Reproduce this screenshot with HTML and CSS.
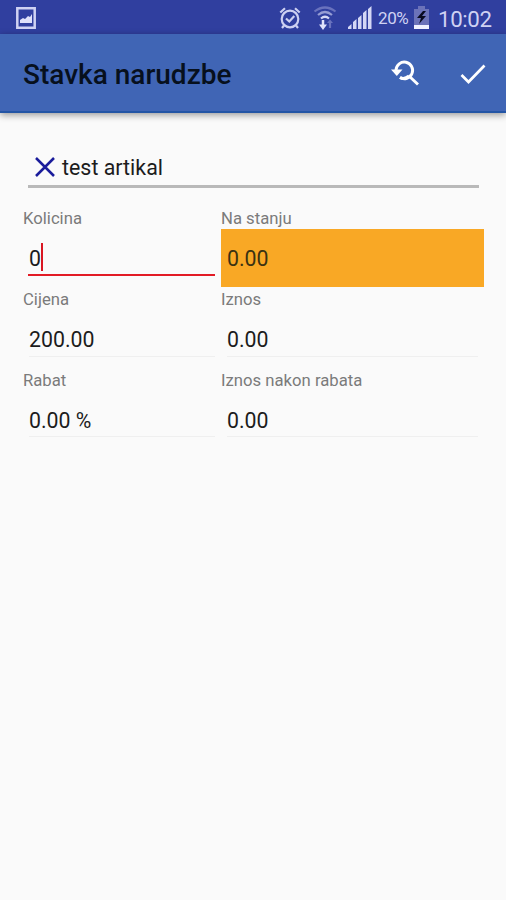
FILE: index.html
```html
<!DOCTYPE html>
<html lang="hr">
<head>
<meta charset="utf-8">
<meta name="viewport" content="width=device-width">
<title>Stavka narudzbe</title>
<link rel="stylesheet" href="styles.css">
</head>
<body>
<div class="statusbar">
  <svg class="photo" width="20" height="22" viewBox="0 0 20 22"><path d="M1.3 1.3h17.4v19.4H1.3z" fill="none" stroke="#cfd2f3" stroke-width="2.5"/><path d="M4 16v-3l3-2 2 1 3-3 2 1 2-3v9z" fill="#dfe1fa"/></svg>
  <svg class="alarm" width="22" height="24" viewBox="0 0 22 24" fill="none" stroke="#cdd0f2" stroke-width="2.2"><circle cx="11" cy="13" r="8.3"/><path d="M1.3 6.500 6 2.300M20.700 6.500 16 2.300M5 19.500 3 22M17 19.500l2 2.500"/><path d="m7 12.500 3.300 3 5-5.500"/></svg>
  <svg class="wifi" width="24" height="26" viewBox="0 0 24 26" fill="none" stroke-width="2.200"><path d="M1.500 6.500Q12-1.500 22.500 6.500" stroke="#6972bd"/><path d="M5 10Q12 4 19 10" stroke="#969dd4"/><path d="M8 13.500q4-3.500 8 0" stroke="#d5d8f5"/><path d="M10 15v7" stroke="#e0e2fb" stroke-width="2.500"/><path d="M6 19.500h8L10 25z" fill="#e0e2fb"/><path d="M17 17v6" stroke="#6972bd"/><path d="m14 18 3-3.500 3 3.500z" fill="#6972bd"/></svg>
  <svg class="signal" width="24" height="23" viewBox="0 0 24 23" fill="#d4d7f5"><path d="M0 23v-2l3.500-3v5zM5 23v-7l3.500-3v10zM10 23V12l3.500-3v14zM15 23V7l3.500-3v19zM20 23V3l3.500-3v23z"/></svg>
  <span class="percent">20%</span>
  <svg class="battery" width="15" height="23" viewBox="0 0 15 23"><path d="M4 0h7v3h4v17H0V3h4z" fill="#6b72b9"/><path d="M0 19h15v4H0z" fill="#f0f1ff"/><path d="m9 5-6 7h4l-2 6 7-8H8l4-5z" fill="#080a20"/></svg>
  <span class="clock">10:02</span>
</div>
<header class="appbar">
  <h1>Stavka narudzbe</h1>
  <svg class="find" width="29" height="28" viewBox="0 0 29 28" fill="none" stroke="#fff" stroke-width="2.900"><path d="M5 11a8.300 8.300 0 1 1 4 7.500M17.500 16.500l9.500 9"/><path d="M9 18.500q4 2.500 9-1.500"/><path d="M0 10.500h11.500L5.800 17z" fill="#fff" stroke="none"/></svg>
  <svg class="check" width="26" height="20" viewBox="0 0 26 20" fill="none" stroke="#fff" stroke-width="2.700"><path d="m1.500 11 7 7L24.500 1.500"/></svg>
</header>
<main>
  <div class="article">
    <svg width="20" height="20" viewBox="0 0 20 20" stroke="#1a1c9b" stroke-width="2.500"><path d="m1 1 18 18M19 1 1 19"/></svg>
    <span>test artikal</span>
  </div>
  <div class="fields">
    <div class="field"><label>Kolicina</label><div class="value active"><span>0</span><i class="caret"></i></div></div>
    <div class="field"><label>Na stanju</label><div class="value stock">0.00</div></div>
    <div class="field"><label>Cijena</label><div class="value">200.00</div></div>
    <div class="field"><label>Iznos</label><div class="value">0.00</div></div>
    <div class="field"><label>Rabat</label><div class="value last">0.00 %</div></div>
    <div class="field"><label>Iznos nakon rabata</label><div class="value last">0.00</div></div>
  </div>
</main>
</body>
</html>
```
FILE: styles.css
```css
* { box-sizing: border-box; }
body {
  margin: 0;
  height: 900px;
  background: #fafafa;
  font-family: Roboto, sans-serif;
  color: #1c1c1c;
}
svg { display: block; flex: none; }
.statusbar {
  display: flex;
  align-items: flex-start;
  height: 34px;
  padding: 7px 0 0 16px;
  background: #303f9f;
  color: #cfd2f3;
}
.alarm { margin: -1px 0 0 243px; }
.wifi { margin: -2px 0 0 12px; }
.signal { margin: -1px 0 0 11px; }
.percent {
  width: 34px;
  margin-left: 6px;
  font-size: 17px;
  line-height: 23px;
  letter-spacing: -0.4px;
}
.battery { margin: -1px 0 0 2px; }
.clock {
  margin-left: 9px;
  font-size: 22.3px;
  line-height: 24px;
  letter-spacing: -0.4px;
}
.appbar {
  display: flex;
  align-items: center;
  height: 79px;
  padding: 0 20px 0 23px;
  background: #4065b5;
  border-bottom: 2px solid #2355a5;
  box-shadow: 0 2px 7px rgba(0, 0, 0, .4);
}
h1 {
  flex: 1;
  margin: 4px 0 0;
  font-size: 28px;
  line-height: 34px;
  font-weight: 500;
  color: #07101d;
}
.find { margin-right: 40px; }
.check { margin-top: 3px; }
main { padding: 33px 22px 0 23px; }
.article {
  display: flex;
  align-items: center;
  height: 42px;
  margin: 0 5px 18px;
  padding: 3px 0 0 7px;
  border-bottom: 3px solid #b9b9b9;
  font-size: 21.4px;
}
.article span { margin-left: 7px; }
.fields {
  display: grid;
  grid-template-columns: 198px 263px;
}
.field label {
  display: block;
  height: 23px;
  font-size: 16.7px;
  line-height: 26px;
  color: #7b7b7b;
}
.value {
  display: flex;
  align-items: center;
  height: 58px;
  padding-left: 6px;
  font-size: 21.3px;
  background: linear-gradient(#efefef, #efefef) 6px 46px / calc(100% - 12px) 1px no-repeat;
}
.last { background-position: 6px 45px; }
.active {
  background: linear-gradient(#e21b25, #e21b25) 5px 45px / 187px 2px no-repeat;
}
.caret {
  width: 2px;
  height: 28px;
  margin-top: -2px;
  background: #d91622;
}
.stock {
  background: #f9a825;
  color: #3b3212;
}
```
